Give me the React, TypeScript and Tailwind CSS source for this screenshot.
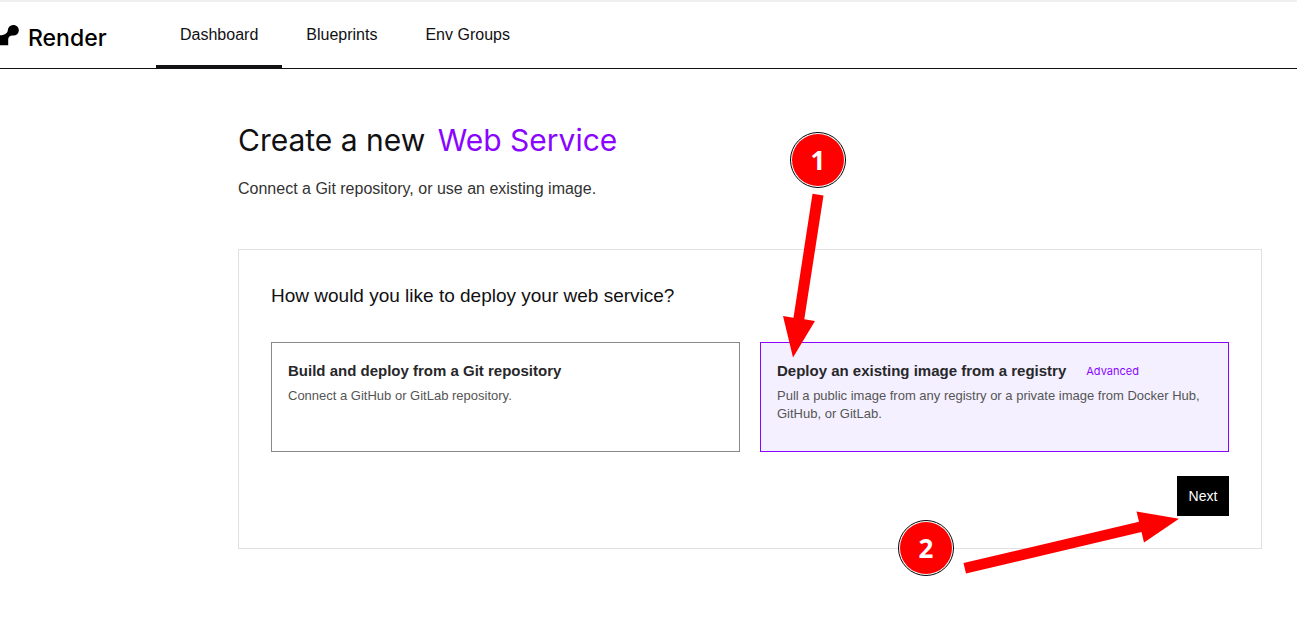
import { useState } from "react";

const tabs = ["Dashboard", "Blueprints", "Env Groups"];

const options = [
  {
    id: "git",
    title: "Build and deploy from a Git repository",
    tag: "",
    text: "Connect a GitHub or GitLab repository.",
  },
  {
    id: "image",
    title: "Deploy an existing image from a registry",
    tag: "Advanced",
    text: "Pull a public image from any registry or a private image from Docker Hub, GitHub, or GitLab.",
  },
];

function Header() {
  return (
    <header className="flex h-[69px] border-t-2 border-b border-t-[#efefef] border-b-[#111013]">
      <a href="#home" className="flex w-[156px] shrink-0 items-start gap-[9px] pt-[23px]">
        <svg viewBox="0 0 19 21" className="h-[21px] w-[19px]" aria-hidden="true">
          <path
            d="M13.2 0a5.3 5.3 0 1 1-.6 10.5c-2.4-.1-4.4 1.6-4.4 3.8v6H0V10.300C4 10.300 7.500 8.500 7.800 5.200A5.300 5.300 0 0 1 13.200 0Z"
            fill="#000"
          />
        </svg>
        <span className="font-['Inter',sans-serif] text-[23px] leading-[26px] font-medium text-black">
          Render
        </span>
      </a>
      <nav className="flex">
        {tabs.map((tab, i) => (
          <a
            key={tab}
            href={"#" + tab}
            className={
              i === 0
                ? "border-b-[3px] border-[#111013] px-6 pt-[21px] text-base"
                : "px-6 pt-[21px] text-base"
            }
          >
            {tab}
          </a>
        ))}
      </nav>
    </header>
  );
}

function Step({ n, className }: { n: number; className: string }) {
  return (
    <div
      className={
        "absolute flex size-14 items-center justify-center rounded-full border border-black bg-white p-px " +
        className
      }
    >
      <span className="flex size-full items-center justify-center rounded-full bg-[#ff0000] font-['Open_Sans',sans-serif] text-[26px] font-bold text-white">
        {n}
      </span>
    </div>
  );
}

export default function App() {
  const [choice, setChoice] = useState("image");
  return (
    <div className="relative min-h-screen bg-white font-['Liberation_Sans',Arial,sans-serif] text-[#111013]">
      <Header />
      <main className="pt-[51px] pr-[35px] pl-[238px]">
        <h1 className="font-['Inter',sans-serif] text-[30px] leading-10">
          Create a new <span className="ml-1 text-[#8a05ff]">Web Service</span>
        </h1>
        <p className="mt-[17px] text-base text-[#333]">
          Connect a Git repository, or use an existing image.
        </p>
        <section className="mt-12 border border-[#e0e0e0] p-8">
          <h2 className="text-[19px] leading-7">How would you like to deploy your web service?</h2>
          <div className="mt-8 grid grid-cols-2 gap-5">
            {options.map((o) => (
              <button
                key={o.id}
                type="button"
                aria-pressed={choice === o.id}
                onClick={() => setChoice(o.id)}
                className={
                  choice === o.id
                    ? "flex h-[110px] flex-col border border-[#8a05ff] bg-[#f4f0ff] px-4 py-4 text-left"
                    : "flex h-[110px] flex-col border border-[#888] px-4 py-4 text-left"
                }
              >
                <span className="flex items-center gap-5">
                  <span className="text-[15px] leading-6 font-bold text-[#27272a]">{o.title}</span>
                  {o.tag && (
                    <span className="font-['Inter',sans-serif] text-[11px] text-[#8a05ff]">
                      {o.tag}
                    </span>
                  )}
                </span>
                <span className="mt-1 text-[13px] leading-[18px] text-[#555]">{o.text}</span>
              </button>
            ))}
          </div>
          <div className="mt-6 flex justify-end">
            <button type="button" className="h-10 w-[52px] bg-black text-sm text-white">
              Next
            </button>
          </div>
        </section>
      </main>
      <svg
        viewBox="0 0 1297 625"
        className="pointer-events-none absolute top-0 left-0 h-[625px] w-[1297px]"
        fill="#ff0000"
        aria-hidden="true"
      >
        <path d="M812.500 193.700 823.500 195.500 804.300 319.300 815 321 793 357.500 783 316 793.500 317.700Z" />
        <path d="M963.500 563 1139 521.700 1136.500 511.500 1179 518.700 1144 542.500 1141.500 532 966 573.500Z" />
      </svg>
      <Step n={1} className="top-[132px] left-[790px]" />
      <Step n={2} className="top-[520px] left-[898px]" />
    </div>
  );
}
